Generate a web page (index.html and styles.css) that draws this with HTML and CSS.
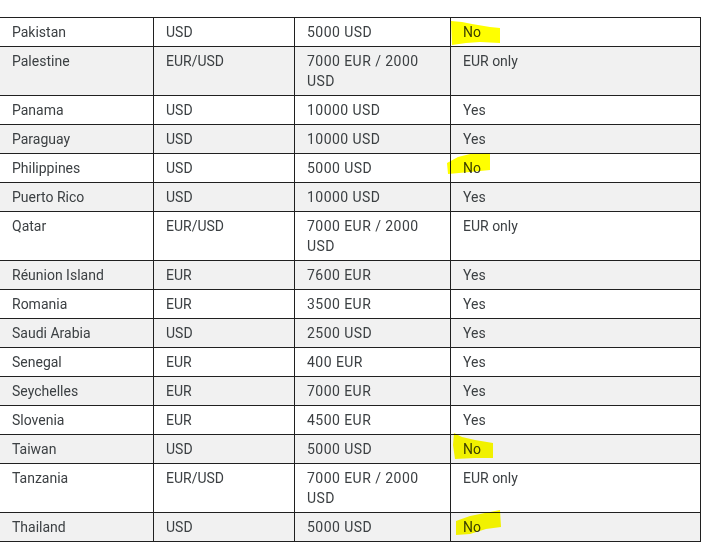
FILE: index.html
```html
<!DOCTYPE html>
<html lang="en">
<head>
<meta charset="utf-8">
<title>Currency table</title>
<link rel="stylesheet" href="styles.css">
</head>
<body>
<table class="rates">
  <colgroup>
    <col class="c1"><col class="c2"><col class="c3"><col class="c4">
  </colgroup>
  <tbody>
    <tr><td>Pakistan</td><td>USD</td><td class="amt">5000 USD</td><td>No</td></tr>
    <tr><td>Palestine</td><td>EUR/USD</td><td class="amt">7000 EUR / 2000 USD</td><td>EUR only</td></tr>
    <tr><td>Panama</td><td>USD</td><td class="amt">10000 USD</td><td>Yes</td></tr>
    <tr><td>Paraguay</td><td>USD</td><td class="amt">10000 USD</td><td>Yes</td></tr>
    <tr><td>Philippines</td><td>USD</td><td class="amt">5000 USD</td><td>No</td></tr>
    <tr><td>Puerto Rico</td><td>USD</td><td class="amt">10000 USD</td><td>Yes</td></tr>
    <tr><td>Qatar</td><td>EUR/USD</td><td class="amt">7000 EUR / 2000 USD</td><td>EUR only</td></tr>
    <tr><td>Réunion Island</td><td>EUR</td><td class="amt">7600 EUR</td><td>Yes</td></tr>
    <tr><td>Romania</td><td>EUR</td><td class="amt">3500 EUR</td><td>Yes</td></tr>
    <tr><td>Saudi Arabia</td><td>USD</td><td class="amt">2500 USD</td><td>Yes</td></tr>
    <tr><td>Senegal</td><td>EUR</td><td class="amt">400 EUR</td><td>Yes</td></tr>
    <tr><td>Seychelles</td><td>EUR</td><td class="amt">7000 EUR</td><td>Yes</td></tr>
    <tr><td>Slovenia</td><td>EUR</td><td class="amt">4500 EUR</td><td>Yes</td></tr>
    <tr><td>Taiwan</td><td>USD</td><td class="amt">5000 USD</td><td>No</td></tr>
    <tr><td>Tanzania</td><td>EUR/USD</td><td class="amt">7000 EUR / 2000 USD</td><td>EUR only</td></tr>
    <tr><td>Thailand</td><td>USD</td><td class="amt">5000 USD</td><td>No</td></tr>
  </tbody>
</table>
<svg class="marks" width="701" height="542" viewBox="0 0 701 542" aria-hidden="true">
  <path d="M451,21 L462,22 L472,24 L490,27 L500,28 L500,43 L480,42 L466,43 L452,45 Z"/>
  <path d="M447,163 L458,157 L470,154 L490,153 L490,170 L470,172 L448,174 Z"/>
  <path d="M454,433 L462,437 L475,440 L493,443 L493,458 L475,458 L455,459 L453,445 Z"/>
  <path d="M456,521 L470,516 L485,513 L500,510 L501,527 L486,529 L470,534 L456,535 Z"/>
</svg>
</body>
</html>
```
FILE: styles.css
```css
html, body {
  margin: 0;
  padding: 0;
  background: #ffffff;
}
body {
  position: relative;
  width: 701px;
  height: 542px;
  overflow: hidden;
  font-family: Roboto, "Noto Sans", Arial, sans-serif;
  font-size: 14px;
  color: #3c4043;
}
.rates {
  border-collapse: collapse;
  table-layout: fixed;
  width: 701px;
  margin: 17px 0 0 -1px;
}
.c1 { width: 154px; }
.c2 { width: 141px; }
.c3 { width: 156px; }
.c4 { width: 250px; }
.rates td {
  border: 1px solid #202020;
  padding: 4px 12px;
  line-height: 20px;
  vertical-align: top;
  text-align: left;
}
.rates td.amt {
  letter-spacing: 0.45px;
}
.rates tr:nth-child(even) td {
  background: #f1f1f1;
}
.marks {
  position: absolute;
  top: 0;
  left: 0;
  pointer-events: none;
  mix-blend-mode: multiply;
}
.marks path {
  fill: #ffff00;
}
```
